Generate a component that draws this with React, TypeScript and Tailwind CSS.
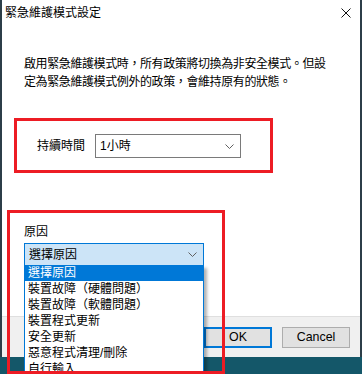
import React from 'react';

const reasons = [
  '選擇原因',
  '裝置故障（硬體問題）',
  '裝置故障（軟體問題）',
  '裝置程式更新',
  '安全更新',
  '惡意程式清理/刪除',
  '自行輸入',
];

function Chevron({ color = '#606060' }: { color?: string }) {
  return (
    <svg width="9" height="5" viewBox="0 0 9 5" fill="none">
      <path d="M0.5 0.5 L4.5 4.5 L8.5 0.5" stroke={color} strokeWidth="1" />
    </svg>
  );
}

export default function App() {
  return (
    <div className="relative w-[362px] h-[374px] overflow-hidden bg-[#145769] font-['Liberation_Sans','Noto_Sans_CJK_TC',sans-serif] text-black">
      {/* ダイアログ本体 */}
      <div className="flex flex-col w-full h-[357px] bg-white border-l-2 border-r-2 border-[#2c3e48]">
        {/* タイトルバー */}
        <div className="flex items-center justify-between h-[26px] pl-[3px] pr-[9px]">
          <span className="text-[12px] leading-none">緊急維護模式設定</span>
          <svg width="10" height="10" viewBox="0 0 10 10">
            <path d="M0.5 0.5 L9.5 9.5 M9.5 0.5 L0.5 9.5" stroke="#111" strokeWidth="1" />
          </svg>
        </div>

        {/* 説明 */}
        <p className="mt-[29px] ml-[22px] text-[12px] leading-[18px] tracking-[-0.4px] whitespace-nowrap">
          啟用緊急維護模式時，所有政策將切換為非安全模式。但設
          <br />
          定為緊急維護模式例外的政策，會維持原有的狀態。
        </p>

        {/* 持續時間 */}
        <div className="flex items-center mt-[43px] ml-[35px] gap-[10px]">
          <span className="text-[12px] leading-none">持續時間</span>
          <div className="flex items-center justify-between w-[146px] h-[24px] border border-[#7a7a7a] pl-[4px] pr-[6px]">
            <span className="text-[12px] leading-none">1小時</span>
            <Chevron />
          </div>
        </div>

        {/* 原因 */}
        <div className="mt-[68px] ml-[22px] text-[12px] leading-none">原因</div>
        <div className="flex items-center justify-between mt-[5px] ml-[22px] w-[180px] h-[23px] bg-[#cce4f7] border border-[#0078d7] pl-[4px] pr-[6px]">
          <span className="text-[12px] leading-none">選擇原因</span>
          <Chevron />
        </div>

        {/* フッター */}
        <div className="flex justify-end gap-[10px] mt-auto h-[41px] pt-[10px] pr-[10px] bg-[#f0f0f0] border-t border-[#dfdfdf]">
          <button className="w-[68px] h-[21px] bg-[#e1e1e1] border-2 border-[#0078d7] text-[12.4px] leading-none">
            OK
          </button>
          <button className="w-[68px] h-[21px] bg-[#e1e1e1] border border-[#adadad] text-[12.4px] leading-none">
            Cancel
          </button>
        </div>
      </div>

      {/* ドロップダウンリスト */}
      <div className="absolute left-[24px] top-[265px] w-[180px] h-[120px] bg-white border-x border-[#0078d7] shadow-[3px_3px_3px_rgba(0,0,0,0.3)]">
        {reasons.map((r, i) => (
          <div
            key={r}
            className={`h-[16px] pl-[3px] flex items-center text-[12px] leading-none ${i === 0 ? 'bg-[#0078d7] text-white' : ''}`}
          >
            {r}
          </div>
        ))}
      </div>

      {/* 注釈の赤枠 */}
      <div className="absolute left-[14px] top-[118px] w-[259px] h-[55px] border-[3px] border-[#ed1c24]" />
      <div className="absolute left-[7px] top-[210px] w-[218px] h-[164px] border-[3px] border-[#ed1c24]" />
    </div>
  );
}
